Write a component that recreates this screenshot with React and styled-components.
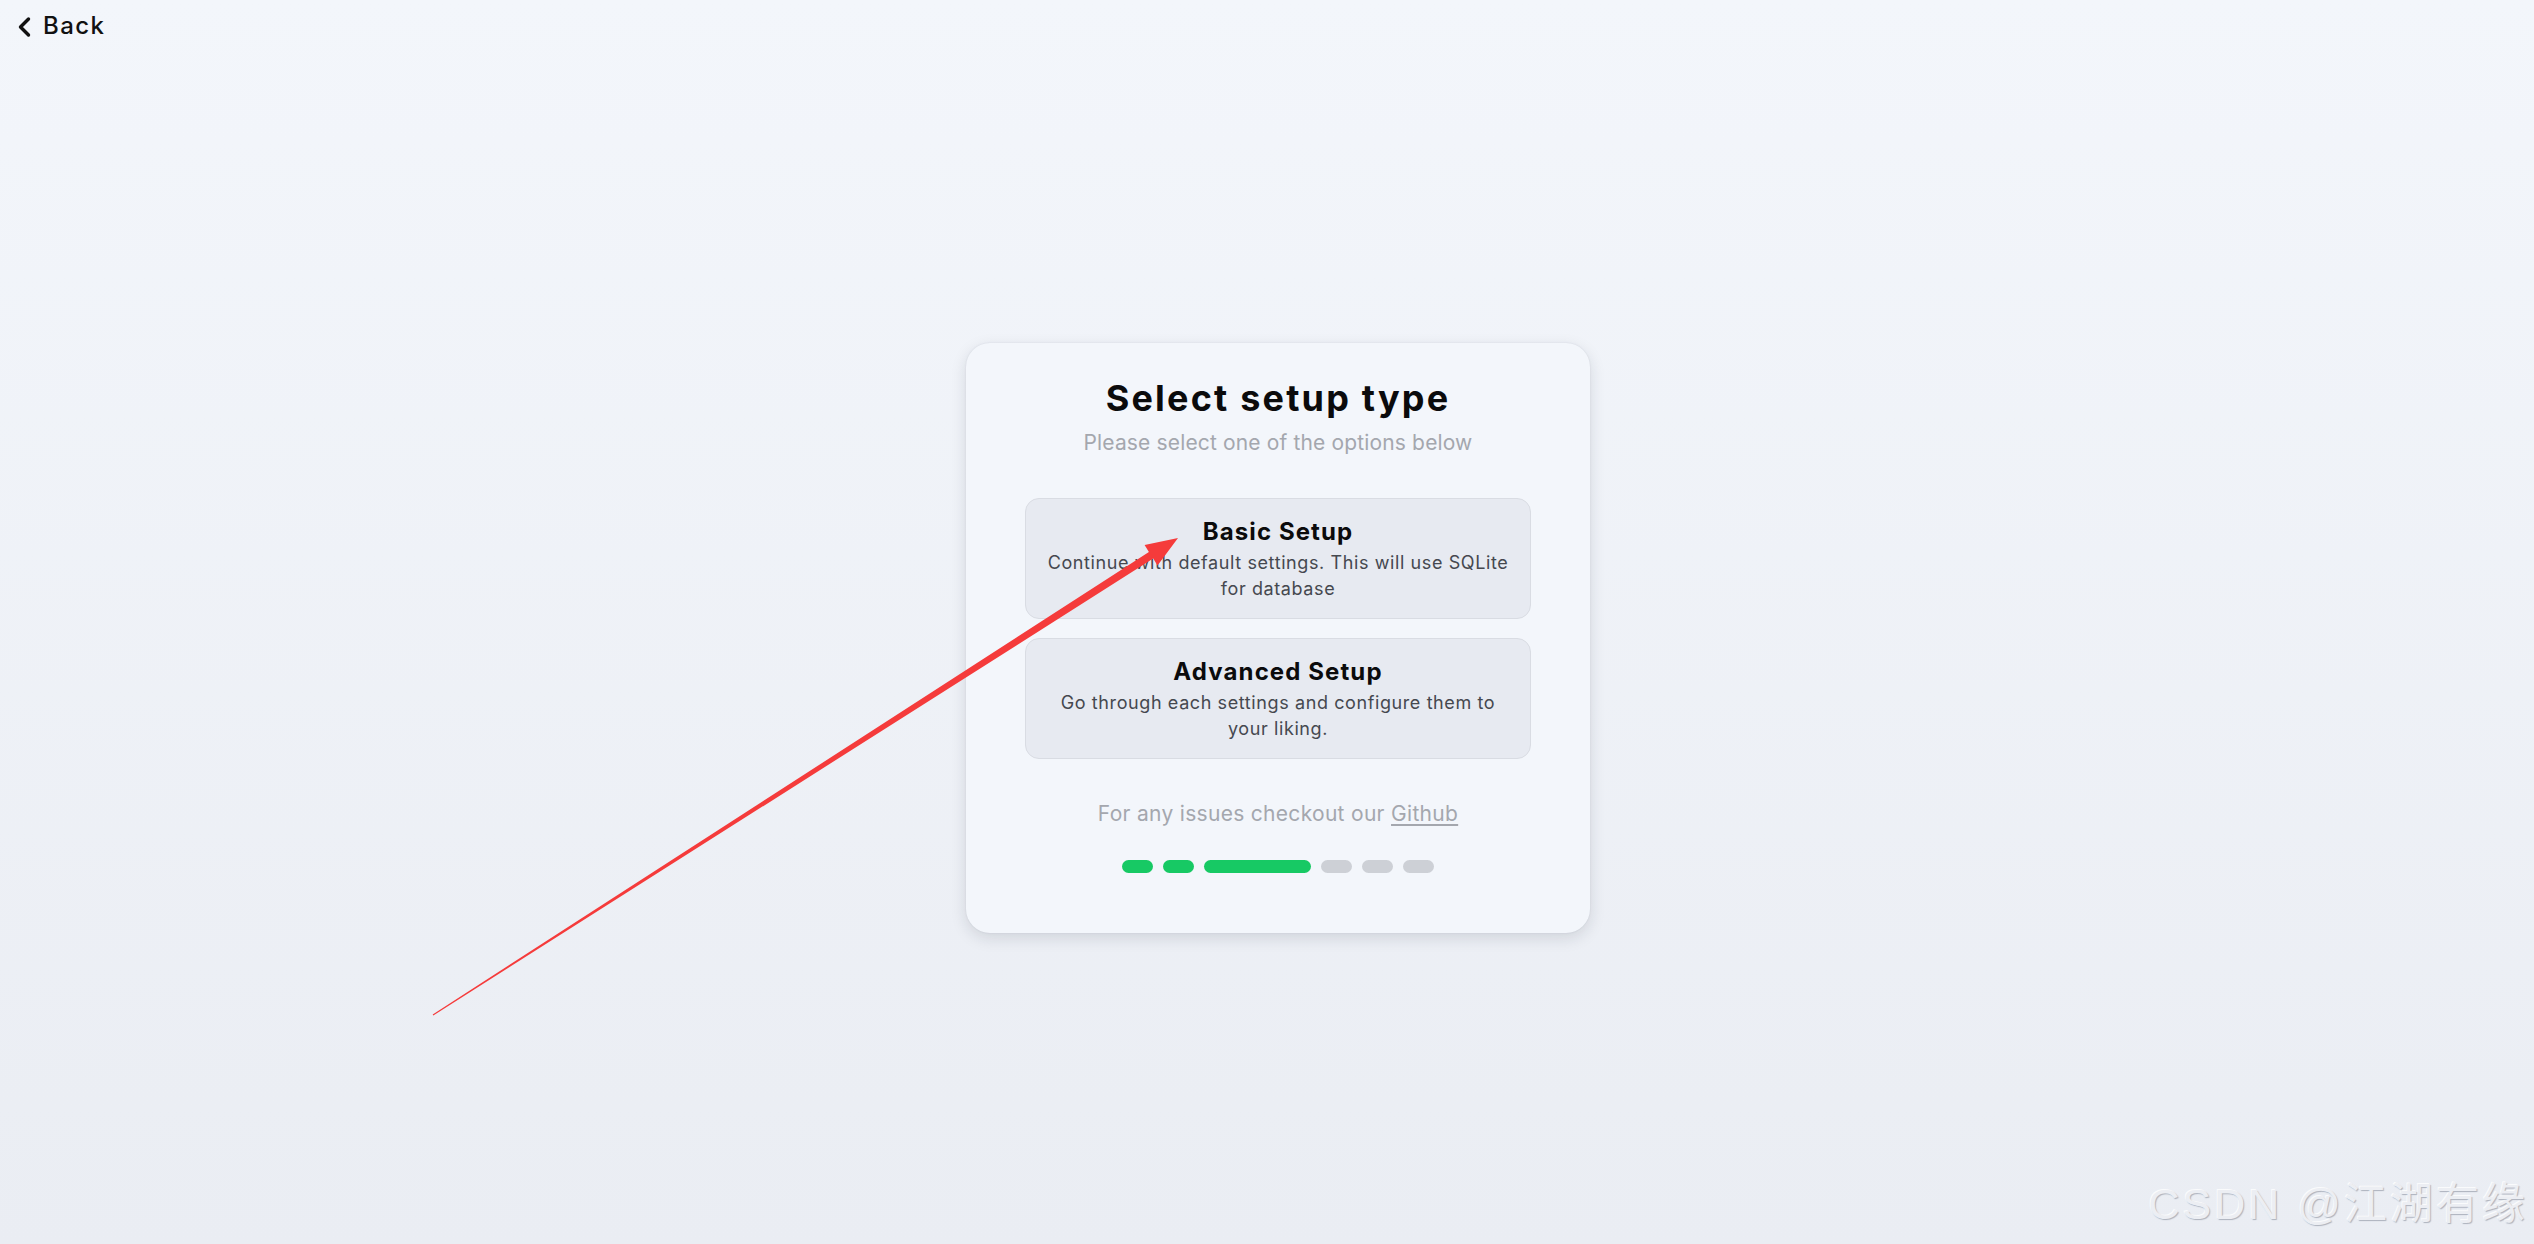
import React from "react";
import styled, { createGlobalStyle } from "styled-components";

const GlobalStyle = createGlobalStyle`
    html, body {
        margin: 0;
        padding: 0;
    }
    body {
        font-family: "Inter", "Open Sans", sans-serif;
        color: #111;
    }
    * {
        box-sizing: border-box;
    }
`;

const Page = styled.div`
    position: relative;
    width: 100%;
    height: 1244px;
    overflow: hidden;
    display: flex;
    flex-direction: column;
    background: linear-gradient(180deg, #f3f6fb 0%, #eaedf3 100%);
`;

const TopBar = styled.header`
    display: flex;
    align-items: center;
    height: 52px;
    padding: 10px 16px;
`;

const BackLink = styled.a`
    display: flex;
    align-items: center;
    gap: 11px;
    height: 32px;
    font-size: 24px;
    line-height: 32px;
    font-weight: 500;
    letter-spacing: 1.4px;
    color: #111;
    text-decoration: none;
    cursor: pointer;
    & svg {
        display: block;
        margin-top: 2px;
    }
`;

const Main = styled.main`
    flex: 1;
    display: flex;
    align-items: center;
    justify-content: center;
    padding: 0 0 20px 22px;
`;

const Card = styled.section`
    width: 624px;
    padding: 33px 59px 60px;
    background: #f3f6fb;
    border-radius: 24px;
    box-shadow: 0 5px 16px rgba(20, 30, 50, 0.13), 0 0 2px rgba(20, 30, 50, 0.1);
    display: flex;
    flex-direction: column;
    align-items: stretch;
    text-align: center;
`;

const Title = styled.h1`
    margin: 0;
    font-size: 36px;
    line-height: 44px;
    font-weight: 700;
    color: #0b0b0c;
    letter-spacing: 2.2px;
`;

const Subtitle = styled.p`
    margin: 8px 0 0;
    font-size: 21px;
    line-height: 30px;
    letter-spacing: 0.15px;
    color: #a4a7ae;
`;

const Options = styled.div`
    margin-top: 40px;
    display: flex;
    flex-direction: column;
    gap: 19px;
`;

const Option = styled.button`
    display: block;
    width: 100%;
    padding: 17px 12px 16px;
    border: 1px solid #d9dce3;
    border-radius: 14px;
    background: #e7eaf1;
    font-family: inherit;
    text-align: center;
    cursor: pointer;
`;

const OptionTitle = styled.div`
    font-size: 24px;
    line-height: 32px;
    font-weight: 700;
    letter-spacing: 1.1px;
    color: #0b0b0c;
`;

const OptionText = styled.div`
    margin-top: 2px;
    font-size: 18px;
    line-height: 26px;
    letter-spacing: 0.6px;
    color: #45484f;
`;

const Footer = styled.p`
    margin: 40px 0 0;
    font-size: 21px;
    line-height: 30px;
    letter-spacing: 0.3px;
    color: #a4a7ae;
    & a {
        color: inherit;
        text-decoration: underline;
        text-underline-offset: 3px;
    }
`;

const Steps = styled.div`
    margin-top: 31px;
    display: flex;
    justify-content: center;
    gap: 10px;
`;

const Step = styled.span`
    display: block;
    height: 13px;
    width: ${(p) => (p.$active ? 107 : 31)}px;
    border-radius: 7px;
    background: ${(p) => (p.$done ? "#17c964" : "#cdd0d6")};
`;

const Overlay = styled.svg`
    position: absolute;
    top: 0;
    left: 0;
    pointer-events: none;
`;

const Watermark = styled.div`
    position: absolute;
    right: 6px;
    bottom: 16px;
    font-family: "Liberation Sans", "Noto Sans CJK SC", sans-serif;
    font-size: 43px;
    line-height: 48px;
    letter-spacing: 3px;
    color: #eceef3;
    text-shadow: 1px 1px 1px rgba(60, 70, 90, 0.35), -1px -1px 0 rgba(255, 255, 255, 0.8);
    pointer-events: none;
`;

const steps = [
    { done: true },
    { done: true },
    { done: true, active: true },
    { done: false },
    { done: false },
    { done: false },
];

// red annotation arrow drawn over the page
const tail = [433, 1015];
const tip = [1178, 538];
const arrowPoints = (() => {
    const dx = tip[0] - tail[0];
    const dy = tip[1] - tail[1];
    const len = Math.hypot(dx, dy);
    const ux = dx / len;
    const uy = dy / len;
    const nx = -uy;
    const ny = ux;
    const bx = tip[0] - ux * 32;
    const by = tip[1] - uy * 32;
    const pt = (x, y) => `${x.toFixed(1)},${y.toFixed(1)}`;
    return [
        pt(tail[0] + nx * 0.6, tail[1] + ny * 0.6),
        pt(bx + nx * 4, by + ny * 4),
        pt(bx + nx * 12, by + ny * 12),
        pt(tip[0], tip[1]),
        pt(bx - nx * 12, by - ny * 12),
        pt(bx - nx * 4, by - ny * 4),
        pt(tail[0] - nx * 0.6, tail[1] - ny * 0.6),
    ].join(" ");
})();

const App = () => {
    return (
        <Page>
            <GlobalStyle />
            <TopBar>
                <BackLink>
                    <svg width="16" height="22" viewBox="0 0 16 22">
                        <path d="M12.5 3 L4.5 11 L12.5 19" fill="none" stroke="#111" strokeWidth="3.4" strokeLinecap="round" strokeLinejoin="round" />
                    </svg>
                    Back
                </BackLink>
            </TopBar>
            <Main>
                <Card>
                    <Title>Select setup type</Title>
                    <Subtitle>Please select one of the options below</Subtitle>
                    <Options>
                        <Option>
                            <OptionTitle>Basic Setup</OptionTitle>
                            <OptionText>Continue with default settings. This will use SQLite for database</OptionText>
                        </Option>
                        <Option>
                            <OptionTitle>Advanced Setup</OptionTitle>
                            <OptionText>Go through each settings and configure them to your liking.</OptionText>
                        </Option>
                    </Options>
                    <Footer>
                        For any issues checkout our <a>Github</a>
                    </Footer>
                    <Steps>
                        {steps.map((s, i) => (
                            <Step key={i} $done={s.done} $active={s.active} />
                        ))}
                    </Steps>
                </Card>
            </Main>
            <Overlay width="2534" height="1244" viewBox="0 0 2534 1244">
                <polygon points={arrowPoints} fill="#f53b3b" />
            </Overlay>
            <Watermark>CSDN @江湖有缘</Watermark>
        </Page>
    );
};

export default App;
